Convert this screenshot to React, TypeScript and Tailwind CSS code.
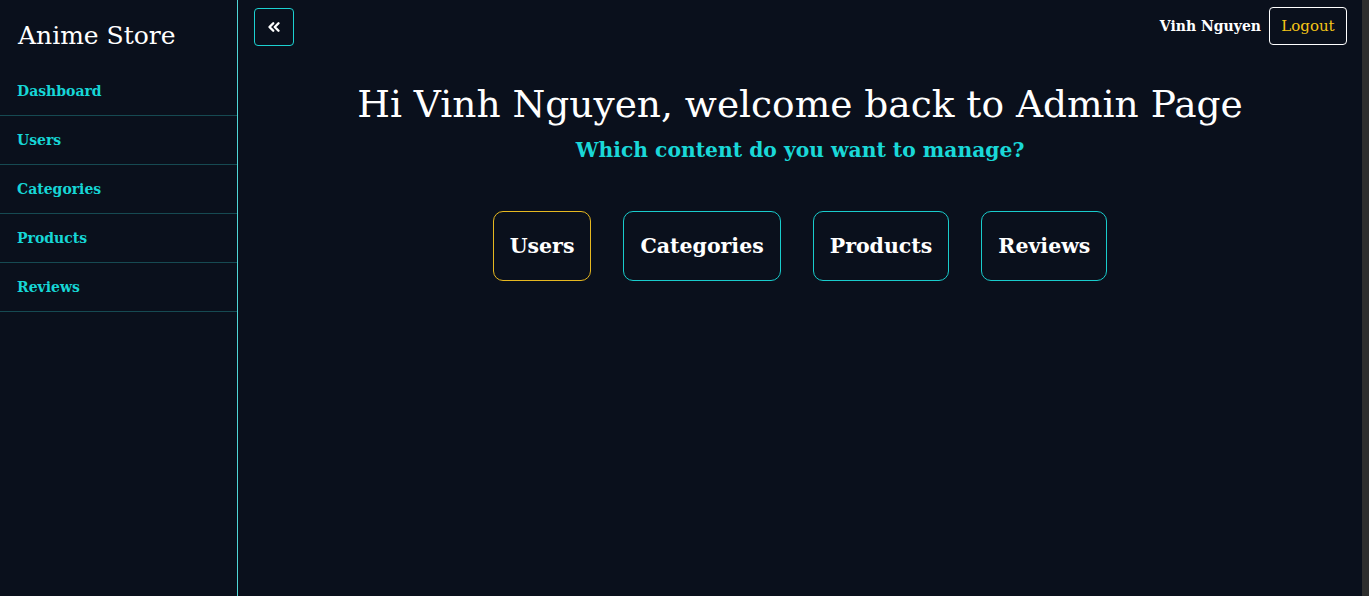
import { ChevronsLeft } from "lucide-react";

const navItems = ["Dashboard", "Users", "Categories", "Products", "Reviews"];

const cards = [
  { label: "Users", active: true },
  { label: "Categories", active: false },
  { label: "Products", active: false },
  { label: "Reviews", active: false },
];

export default function App() {
  return (
    <div className="flex h-[596px] w-full overflow-hidden bg-[#0a101c] font-['DejaVu_Serif',serif] text-white">
      {/* Sidebar */}
      <aside className="flex w-[238px] shrink-0 flex-col border-r border-[#4fd6d6]">
        <div className="px-[18px] pt-[18px] pb-[13px] text-[25px] leading-[36px] text-white">
          Anime Store
        </div>
        <nav className="flex flex-col">
          {navItems.map((item) => (
            <a
              key={item}
              className="flex h-[49px] items-center border-b border-[#164a52] px-[17px] text-[14px] font-bold text-[#16d6d6]"
            >
              {item}
            </a>
          ))}
        </nav>
      </aside>

      {/* Main */}
      <main className="flex min-w-0 flex-1 flex-col">
        <header className="flex items-start justify-between pt-[7px] pl-[16px] pr-[15px]">
          <button className="mt-[1px] flex h-[38px] w-[40px] items-center justify-center rounded-[4px] border border-[#1cd0d0]">
            <ChevronsLeft className="h-[18px] w-[18px] text-white" strokeWidth={3.2} />
          </button>
          <div className="flex items-center gap-[8px]">
            <span className="text-[14px] font-bold text-white">Vinh Nguyen</span>
            <button className="flex h-[38px] w-[78px] items-center justify-center rounded-[4px] border border-white text-[15px] text-[#f5c518]">
              Logout
            </button>
          </div>
        </header>

        <div className="mt-[35px] flex flex-col items-center">
          <h1 className="text-[37.5px] leading-[46px] text-white">
            Hi Vinh Nguyen, welcome back to Admin Page
          </h1>
          <h4 className="mt-[8px] text-[20.3px] leading-[30px] font-semibold text-[#1ad8d8]">
            Which content do you want to manage?
          </h4>

          <div className="mt-[46px] flex gap-[32px]">
            {cards.map((c) => (
              <div
                key={c.label}
                className={`flex h-[70px] items-center justify-center rounded-[10px] border px-[16px] text-[20.5px] font-bold text-white ${
                  c.active ? "border-[#e6b820]" : "border-[#19cccc]"
                }`}
              >
                {c.label}
              </div>
            ))}
          </div>
        </div>
      </main>

      {/* scrollbar strip */}
      <div className="w-[7px] shrink-0 bg-[#2e2e2e]" />
    </div>
  );
}
